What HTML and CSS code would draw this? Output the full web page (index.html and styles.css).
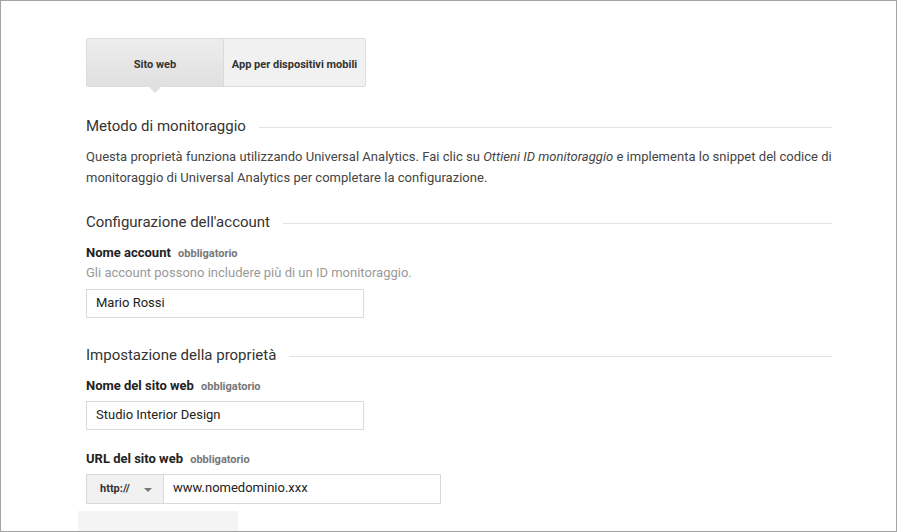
FILE: index.html
```html
<!DOCTYPE html>
<html lang="it">
<head>
<meta charset="utf-8">
<link rel="stylesheet" href="styles.css">
</head>
<body>
<div class="frame">
  <div class="content">
    <div class="tabs">
      <div class="tab active">Sito web</div>
      <div class="tab">App per dispositivi mobili</div>
    </div>

    <div class="section-title first"><span>Metodo di monitoraggio</span></div>
    <p class="desc">Questa proprietà funziona utilizzando Universal Analytics. Fai clic su <em>Ottieni ID monitoraggio</em> e implementa lo snippet del codice di monitoraggio di Universal Analytics per completare la configurazione.</p>

    <div class="section-title"><span>Configurazione dell'account</span></div>
    <div class="label">Nome account <span class="req">obbligatorio</span></div>
    <div class="help">Gli account possono includere più di un ID monitoraggio.</div>
    <div class="input">Mario Rossi</div>

    <div class="section-title second"><span>Impostazione della proprietà</span></div>
    <div class="label">Nome del sito web <span class="req">obbligatorio</span></div>
    <div class="input site">Studio Interior Design</div>

    <div class="label url-label">URL del sito web <span class="req">obbligatorio</span></div>
    <div class="url-group">
      <div class="select">http:// <span class="caret"></span></div>
      <div class="url-input">www.nomedominio.xxx</div>
    </div>
    <div class="grey-box"></div>
  </div>
</div>
</body>
</html>
```
FILE: styles.css
```css
html, body {
  margin: 0;
  padding: 0;
  background: #fff;
}
body {
  font-family: Roboto, "Liberation Sans", Arial, sans-serif;
  color: #333;
}
.frame {
  width: 897px;
  height: 532px;
  box-sizing: border-box;
  border: 1px solid #a3a3a3;
  overflow: hidden;
}
.content {
  padding: 37px 0 0 85px;
  width: 746px;
}
.tabs {
  display: flex;
  width: 280px;
  height: 49px;
  box-sizing: border-box;
  border: 1px solid #dcdcdc;
  border-radius: 2px;
  background: #f1f1f1;
}
.tab {
  display: flex;
  align-items: center;
  justify-content: center;
  font-size: 11px;
  font-weight: 700;
  color: #333;
  position: relative;
  padding-top: 3px;
}
.tab.active {
  width: 136px;
  background: linear-gradient(#ededed, #e0e0e0);
  border-right: 1px solid #dadada;
}
.tab.active::after {
  content: "";
  position: absolute;
  left: 61px;
  bottom: -7px;
  border-left: 7px solid transparent;
  border-right: 7px solid transparent;
  border-top: 7px solid #e0e0e0;
}
.tab:not(.active) {
  flex: 1;
}
.section-title {
  display: flex;
  align-items: center;
  font-size: 15px;
  line-height: 20px;
  color: #333;
  margin-top: 24px;
}
.section-title::after {
  content: "";
  flex: 1;
  height: 1px;
  background: #e3e3e3;
  margin-left: 13px;
  margin-top: 2px;
}
.section-title.first {
  margin-top: 29px;
}
.section-title.second {
  margin-top: 27px;
}
.desc {
  margin: 10px 0 0;
  font-size: 13px;
  line-height: 21px;
  color: #444;
  letter-spacing: 0.02px;
}
.label {
  margin-top: 12px;
  font-size: 13px;
  line-height: 18px;
  font-weight: 700;
  color: #222;
}
.req {
  font-size: 11px;
  color: #777;
  margin-left: 4px;
}
.help {
  font-size: 13px;
  line-height: 20px;
  color: #999;
  margin-top: 0;
}
.input {
  margin-top: 6px;
  width: 278px;
  height: 29px;
  box-sizing: border-box;
  border: 1px solid #d9d9d9;
  font-size: 13px;
  line-height: 25px;
  padding: 0 0 2px 9px;
  color: #222;
}
.input.site {
  margin-top: 5px;
}
.url-label {
  margin-top: 20px;
}
.url-group {
  display: flex;
  margin-top: 5px;
  width: 355px;
  height: 30px;
  box-sizing: border-box;
  border: 1px solid #d9d9d9;
}
.select {
  width: 77px;
  box-sizing: border-box;
  background: #f1f1f1;
  border-right: 1px solid #d9d9d9;
  font-size: 11px;
  font-weight: 700;
  color: #333;
  line-height: 28px;
  padding-left: 13px;
  display: flex;
  align-items: center;
}
.caret {
  display: inline-block;
  margin-left: 14px;
  border-left: 4px solid transparent;
  border-right: 4px solid transparent;
  border-top: 4px solid #777;
  margin-top: 2px;
}
.url-input {
  flex: 1;
  font-size: 13px;
  line-height: 26px;
  padding-left: 9px;
  color: #222;
}
.grey-box {
  margin: 7px 0 0 -8px;
  width: 160px;
  height: 30px;
  background: #f4f4f4;
}
```
